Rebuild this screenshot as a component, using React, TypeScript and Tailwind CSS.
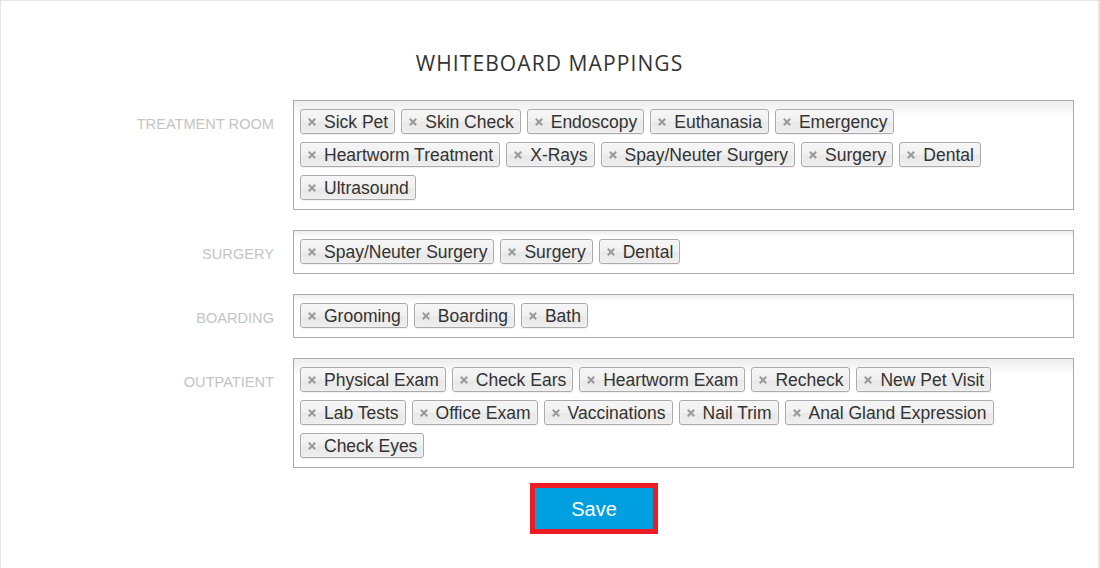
import React from 'react'

type Section = {
	label: string
	tags: string[]
}

const sections: Section[] = [
	{
		label: 'Treatment Room',
		tags: [
			'Sick Pet',
			'Skin Check',
			'Endoscopy',
			'Euthanasia',
			'Emergency',
			'Heartworm Treatment',
			'X-Rays',
			'Spay/Neuter Surgery',
			'Surgery',
			'Dental',
			'Ultrasound',
		],
	},
	{ label: 'Surgery', tags: ['Spay/Neuter Surgery', 'Surgery', 'Dental'] },
	{ label: 'Boarding', tags: ['Grooming', 'Boarding', 'Bath'] },
	{
		label: 'Outpatient',
		tags: [
			'Physical Exam',
			'Check Ears',
			'Heartworm Exam',
			'Recheck',
			'New Pet Visit',
			'Lab Tests',
			'Office Exam',
			'Vaccinations',
			'Nail Trim',
			'Anal Gland Expression',
			'Check Eyes',
		],
	},
]

function Tag({ text }: { text: string }) {
	return (
		<li className="relative mt-[4px] mb-[4px] ml-[6px] h-[25px] whitespace-nowrap rounded-[3px] border border-[#aaaaaa] bg-[linear-gradient(#f4f4f4_20%,#f0f0f0_50%,#e8e8e8_52%,#eeeeee_100%)] pl-[23px] pr-[6px] pt-[4px] text-[17.5px] leading-[17px] text-[#333333] shadow-[inset_0_0_2px_#fff,0_1px_0_rgba(0,0,0,0.05)]">
			<svg className="absolute left-[7px] top-[8px] h-[8px] w-[8px]" viewBox="0 0 8 8">
				<path d="M1.5 1.5L6.5 6.5M6.5 1.5L1.5 6.5" stroke="#999999" strokeWidth={2} strokeLinecap="square" />
			</svg>
			{text}
		</li>
	)
}

function MappingRow({ section }: { section: Section }) {
	return (
		<div className="flex items-start">
			<label className="w-[273px] shrink-0 pt-[15px] text-right text-[14.6px] leading-[18px] uppercase text-[#c4c4c4]">
				{section.label}
			</label>
			<ul className="ml-[19px] flex w-[781px] flex-wrap border border-[#aaaaaa] bg-[linear-gradient(#eeeeee_1%,#ffffff_15%)] pt-[4px] pb-[5px]">
				{section.tags.map((t) => (
					<Tag key={t} text={t} />
				))}
			</ul>
		</div>
	)
}

export default function App() {
	return (
		<div
			className="h-[568px] w-[1100px] overflow-hidden border-l border-t border-r-2 border-[#e6e6e6] bg-white"
			style={{ fontFamily: '"Liberation Sans", Arial, sans-serif' }}
		>
			<h1
				className="pt-[50px] text-center text-[21px] leading-[24px] tracking-[1.1px] text-[#333333]"
				style={{ fontFamily: '"Open Sans", sans-serif' }}
			>
				WHITEBOARD MAPPINGS
			</h1>

			<div className="mt-[25px] flex flex-col gap-[20px]">
				{sections.map((s) => (
					<MappingRow key={s.label} section={s} />
				))}
			</div>

			<div className="mt-[15px] pl-[529px]">
				<button className="h-[51px] w-[128px] border-[5px] border-[#ed1c24] bg-[#009fe0] text-[20px] text-white">
					Save
				</button>
			</div>
		</div>
	)
}
